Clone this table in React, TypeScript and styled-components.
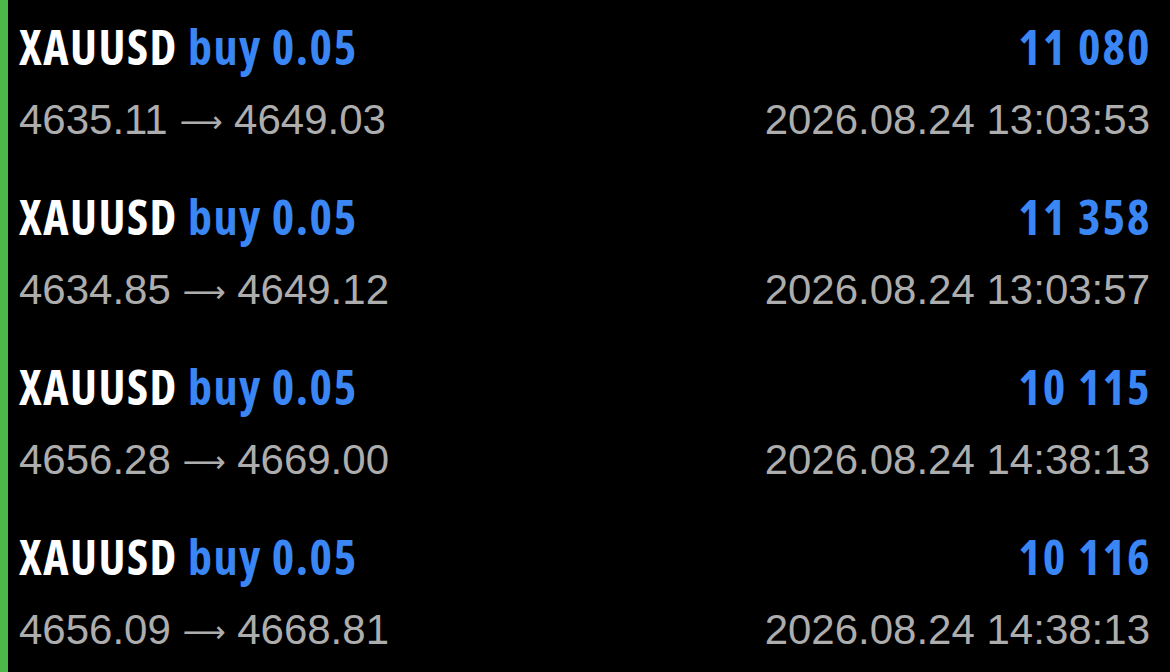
import styled, { createGlobalStyle } from "styled-components";

interface Trade {
    symbol: string;
    side: string;
    volume: string;
    profit: string;
    openPrice: string;
    closePrice: string;
    time: string;
}

const trades: Trade[] = [
    { symbol: "XAUUSD", side: "buy", volume: "0.05", profit: "11 080", openPrice: "4635.11", closePrice: "4649.03", time: "2026.08.24 13:03:53" },
    { symbol: "XAUUSD", side: "buy", volume: "0.05", profit: "11 358", openPrice: "4634.85", closePrice: "4649.12", time: "2026.08.24 13:03:57" },
    { symbol: "XAUUSD", side: "buy", volume: "0.05", profit: "10 115", openPrice: "4656.28", closePrice: "4669.00", time: "2026.08.24 14:38:13" },
    { symbol: "XAUUSD", side: "buy", volume: "0.05", profit: "10 116", openPrice: "4656.09", closePrice: "4668.81", time: "2026.08.24 14:38:13" },
];

const GlobalStyle = createGlobalStyle`
    html, body {
        margin: 0;
        padding: 0;
        background: #000;
    }
    * {
        box-sizing: border-box;
    }
`;

function TradeRow({ trade }: { trade: Trade }) {
    return (
        <Row>
            <TopLine>
                <Title>
                    {trade.symbol} <Accent>{trade.side} {trade.volume}</Accent>
                </Title>
                <Profit>{trade.profit}</Profit>
            </TopLine>
            <BottomLine>
                <span>
                    {trade.openPrice} <Arrow>⟶</Arrow> {trade.closePrice}
                </span>
                <span>{trade.time}</span>
            </BottomLine>
        </Row>
    );
}

function App() {
    return (
        <>
            <GlobalStyle />
            <Screen>
                <List>
                    {trades.map((t, i) => (
                        <TradeRow key={i} trade={t} />
                    ))}
                </List>
            </Screen>
        </>
    );
}

const Screen = styled.div`
    width: 1170px;
    height: 672px;
    background: #000;
    border-left: 8px solid #4cb84a;
    overflow: hidden;
`;

const List = styled.div`
    display: flex;
    flex-direction: column;
`;

const Row = styled.div`
    display: flex;
    flex-direction: column;
    gap: 16px;
    height: 170px;
    padding: 19px 20px 0 11px;
`;

const TopLine = styled.div`
    display: flex;
    justify-content: space-between;
    align-items: baseline;
    height: 56px;
`;

const Title = styled.div`
    font-family: "Open Sans", sans-serif;
    font-stretch: 75%;
    font-weight: 700;
    font-size: 48px;
    letter-spacing: 1.5px;
    line-height: 56px;
    color: #fff;
    white-space: pre;
`;

const Accent = styled.span`
    color: #3a86f5;
`;

const Profit = styled(Title)`
    color: #3a86f5;
    margin-right: -1.5px;
    letter-spacing: 2px;
`;

const BottomLine = styled.div`
    display: flex;
    justify-content: space-between;
    height: 58px;
    font-family: "Liberation Sans", Arial, sans-serif;
    font-size: 42px;
    line-height: 58px;
    color: #adadad;
    white-space: pre;
`;

const Arrow = styled.span`
    font-family: "DejaVu Sans", sans-serif;
    font-size: 30px;
    line-height: 1;
    vertical-align: 2px;
`;

export default App;
